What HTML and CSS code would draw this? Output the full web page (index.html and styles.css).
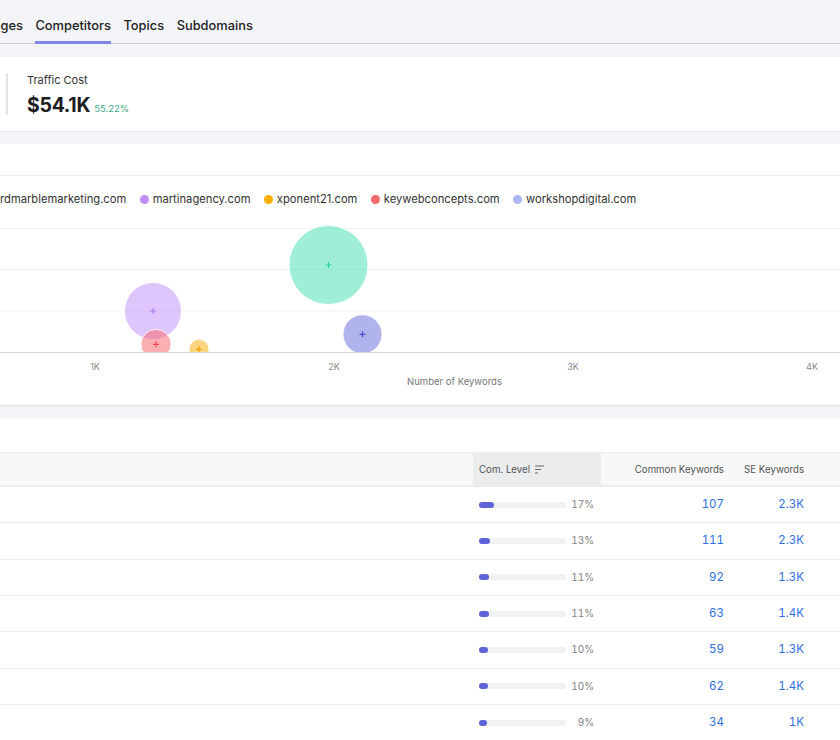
FILE: index.html
```html
<!DOCTYPE html>
<html lang="en">
<head>
<meta charset="utf-8">
<title>Competitors</title>
<link rel="stylesheet" href="styles.css">
</head>
<body>
<nav class="tabs">
  <a class="tab tab-lead">Pages</a>
  <a class="tab is-active">Competitors</a>
  <a class="tab">Topics</a>
  <a class="tab">Subdomains</a>
</nav>

<section class="card stats">
  <div class="stat">
    <div class="stat-label">Traffic Cost</div>
    <div class="stat-value">$54.1K<span class="stat-delta">55.22%</span></div>
  </div>
</section>

<section class="card chart-card">
  <div class="chart-head"></div>
  <ul class="legend">
    <li class="legend-item"><span class="dot dot-green"></span>rdmarblemarketing.com</li>
    <li class="legend-item"><span class="dot dot-purple"></span>martinagency.com</li>
    <li class="legend-item"><span class="dot dot-yellow"></span>xponent21.com</li>
    <li class="legend-item"><span class="dot dot-red"></span>keywebconcepts.com</li>
    <li class="legend-item"><span class="dot dot-blue"></span>workshopdigital.com</li>
  </ul>
  <svg class="bubbles" width="840" height="183" viewBox="0 0 840 183">
    <defs>
      <clipPath id="plot"><rect x="0" y="0" width="840" height="130.5"/></clipPath>
    </defs>
    <g class="grid">
      <line x1="0" x2="840" y1="6.5" y2="6.5"/>
      <line x1="0" x2="840" y1="47.5" y2="47.5"/>
      <line x1="0" x2="840" y1="89" y2="89"/>
    </g>
    <g clip-path="url(#plot)">
      <circle class="b-green" cx="328.5" cy="43" r="39.5"/>
      <circle class="b-purple" cx="153" cy="89" r="28.5"/>
      <circle class="b-red" cx="156" cy="122.3" r="15"/>
      <circle class="b-yellow" cx="199" cy="127.3" r="10"/>
      <circle class="b-blue" cx="362.5" cy="112.3" r="19.5"/>
      <path class="p-green" d="M325.5 43h6M328.5 40v6"/>
      <path class="p-purple" d="M150 89h6M153 86v6"/>
      <path class="p-red" d="M153 122.3h6M156 119.3v6"/>
      <path class="p-yellow" d="M196 127.3h6M199 124.3v6"/>
      <path class="p-blue" d="M359.5 112.3h6M362.5 109.3v6"/>
    </g>
    <line class="axis" x1="0" x2="840" y1="130.5" y2="130.5"/>
    <g class="ticks">
      <text x="95" y="147.5">1K</text>
      <text x="334" y="147.5">2K</text>
      <text x="573" y="147.5">3K</text>
      <text x="812" y="147.5">4K</text>
    </g>
    <text class="axis-title" x="454.5" y="162.5">Number of Keywords</text>
  </svg>
</section>

<section class="card table-card">
  <div class="table-toolbar"></div>
  <div class="tbl">
    <div class="tr th-row">
      <div class="th"></div>
      <div class="th th-sorted">Com. Level
        <svg class="sort-icon" width="10" height="9" viewBox="0 0 10 9"><path d="M0 1h9M0 4.5h6M0 8h3"/></svg>
      </div>
      <div class="th th-num">Common Keywords</div>
      <div class="th th-num">SE Keywords</div>
      <div class="th"></div>
    </div>

    <div class="tr">
      <div class="td"></div>
      <div class="td level"><span class="bar"><span class="bar-fill" style="width:17%"></span></span><span class="pct">17%</span></div>
      <div class="td num">107</div>
      <div class="td num">2.3K</div>
      <div class="td"></div>
    </div>
    <div class="tr">
      <div class="td"></div>
      <div class="td level"><span class="bar"><span class="bar-fill" style="width:13%"></span></span><span class="pct">13%</span></div>
      <div class="td num">111</div>
      <div class="td num">2.3K</div>
      <div class="td"></div>
    </div>
    <div class="tr">
      <div class="td"></div>
      <div class="td level"><span class="bar"><span class="bar-fill" style="width:11%"></span></span><span class="pct">11%</span></div>
      <div class="td num">92</div>
      <div class="td num">1.3K</div>
      <div class="td"></div>
    </div>
    <div class="tr">
      <div class="td"></div>
      <div class="td level"><span class="bar"><span class="bar-fill" style="width:11%"></span></span><span class="pct">11%</span></div>
      <div class="td num">63</div>
      <div class="td num">1.4K</div>
      <div class="td"></div>
    </div>
    <div class="tr">
      <div class="td"></div>
      <div class="td level"><span class="bar"><span class="bar-fill" style="width:10%"></span></span><span class="pct">10%</span></div>
      <div class="td num">59</div>
      <div class="td num">1.3K</div>
      <div class="td"></div>
    </div>
    <div class="tr">
      <div class="td"></div>
      <div class="td level"><span class="bar"><span class="bar-fill" style="width:10%"></span></span><span class="pct">10%</span></div>
      <div class="td num">62</div>
      <div class="td num">1.4K</div>
      <div class="td"></div>
    </div>
    <div class="tr">
      <div class="td"></div>
      <div class="td level"><span class="bar"><span class="bar-fill" style="width:9%"></span></span><span class="pct">9%</span></div>
      <div class="td num">34</div>
      <div class="td num">1K</div>
      <div class="td"></div>
    </div>
  </div>
</section>
</body>
</html>
```

FILE: styles.css
```css
* { box-sizing: border-box; }

html, body {
  margin: 0;
  padding: 0;
}

body {
  background: #f3f4f8;
  font-family: Inter, "Noto Sans", "Liberation Sans", sans-serif;
  color: #222;
  overflow: hidden;
  width: 840px;
  height: 740px;
}

/* Tabs */
.tabs {
  display: flex;
  gap: 12.5px;
  height: 44px;
  border-bottom: 1px solid #cfd1d8;
  margin-left: -15px;
}

.tab {
  height: 44px;
  padding-top: 17px;
  margin-bottom: -1px;
  border-bottom: 3px solid transparent;
  font-size: 12.85px;
  line-height: 18px;
  font-weight: 500;
  color: #222;
  white-space: nowrap;
}

.tab.is-active {
  border-bottom-color: #7d85eb;
}

/* Cards */
.card {
  background: #fff;
  margin-top: 13px;
  box-shadow: 0 1px 1px rgba(0, 0, 0, 0.05);
}

.stats {
  padding: 16px 0 16px 6px;
  height: 74px;
}

.stat {
  border-left: 2px solid #e3e4e6;
  padding-left: 19px;
  height: 42px;
}

.stat-label {
  font-size: 11px;
  line-height: 14px;
  color: #333;
}

.stat-value {
  margin-top: 8px;
  font-size: 19.5px;
  line-height: 20px;
  font-weight: 700;
  color: #1d1d1f;
  letter-spacing: -0.3px;
}

.stat-delta {
  margin-left: 4px;
  font-size: 9.5px;
  font-weight: 400;
  color: #3aa98a;
  letter-spacing: 0;
}

/* Chart */
.chart-card {
  height: 261px;
}

.chart-head {
  height: 32px;
  border-bottom: 1px solid #efeff1;
}

.legend {
  list-style: none;
  margin: 0 0 0 -12.7px;
  padding: 0;
  height: 46px;
  display: flex;
  align-items: center;
  gap: 13.7px;
  white-space: nowrap;
}

.legend-item {
  display: flex;
  align-items: center;
  gap: 3.7px;
  font-size: 11.2px;
  line-height: 14px;
  color: #333;
}

.dot {
  width: 9px;
  height: 9px;
  border-radius: 50%;
  flex: none;
}

.dot-green { background: #3fdcae; }
.dot-purple { background: #c18ef9; }
.dot-yellow { background: #fbb000; }
.dot-red { background: #f76a6c; }
.dot-blue { background: #abb6f7; }

.bubbles {
  display: block;
}

.grid line {
  stroke: #f1f1f3;
  stroke-width: 1;
}

.axis {
  stroke: #d8d9dc;
  stroke-width: 1;
}

.bubbles circle {
  stroke: rgba(255, 255, 255, 0.85);
  stroke-width: 1;
}

.b-green { fill: rgba(64, 224, 178, 0.5); }
.b-purple { fill: rgba(190, 142, 250, 0.5); }
.b-red { fill: rgba(250, 96, 104, 0.5); }
.b-yellow { fill: rgba(251, 170, 0, 0.5); }
.b-blue { fill: rgba(100, 104, 220, 0.5); }

.bubbles path { stroke-width: 1.2; fill: none; }
.p-green { stroke: #2fcf9e; }
.p-purple { stroke: #b17bf5; }
.p-red { stroke: #ef4758; }
.p-yellow { stroke: #f0a000; }
.p-blue { stroke: #484dd3; }

.ticks text {
  font-size: 9px;
  fill: #888;
  text-anchor: middle;
}

.axis-title {
  font-size: 9.5px;
  fill: #777;
  text-anchor: middle;
}

/* Table */
.table-card {
  height: 340px;
}

.table-toolbar {
  height: 34px;
}

.tbl {
  border-top: 1px solid #efeff1;
}

.tr {
  display: grid;
  grid-template-columns: 473px 128px 129px 80px 1fr;
  height: 36.33px;
  border-bottom: 1px solid #eeeef0;
  align-items: center;
}

.th-row {
  height: 34px;
  background: #f8f8f8;
  border-bottom: 2px solid #ececee;
  align-items: stretch;
}

.th {
  display: flex;
  align-items: center;
  font-size: 9.7px;
  line-height: 13px;
  color: #555;
  white-space: nowrap;
}

.th-sorted {
  background: #ebeced;
  padding-left: 6px;
  gap: 5px;
}

.sort-icon path {
  stroke: #666;
  stroke-width: 1.2;
  fill: none;
}

.th-num {
  justify-content: flex-end;
  padding-right: 6px;
}

.td {
  font-size: 11.5px;
  line-height: 15px;
  font-variant-numeric: tabular-nums;
}

.level {
  display: flex;
  align-items: center;
  padding: 0 7px 0 6px;
}

.bar {
  width: 87px;
  height: 6px;
  border-radius: 3px;
  background: #eff1f2;
  flex: none;
  display: flex;
}

.bar-fill {
  height: 6px;
  border-radius: 3px;
  background: #5f63da;
}

.pct {
  flex: 1;
  text-align: right;
  font-size: 10px;
  color: #808080;
}

.num {
  text-align: right;
  padding-right: 6px;
  color: #306fe3;
}
```
